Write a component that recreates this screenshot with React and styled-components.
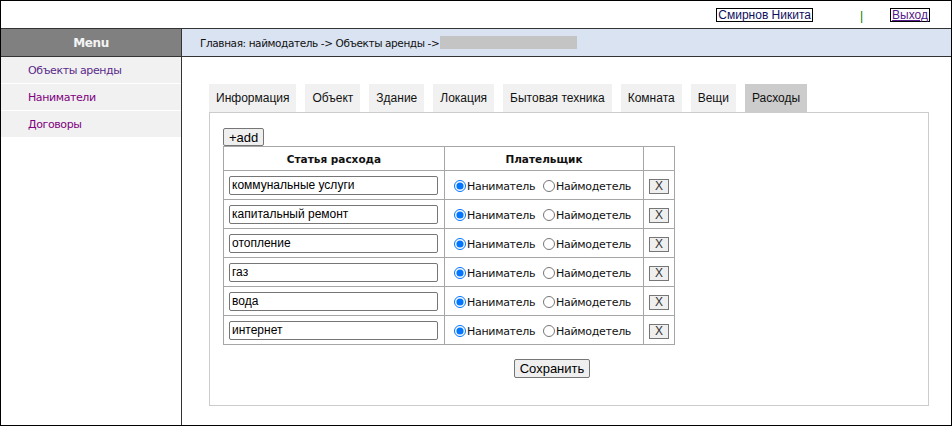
import React from 'react';
import styled, { createGlobalStyle } from 'styled-components';

const GlobalStyle = createGlobalStyle`
  html, body { margin: 0; padding: 0; background: #fff; }
  body { font-family: "Liberation Sans", Arial, sans-serif; }
`;

const tabs = ['Информация', 'Объект', 'Здание', 'Локация', 'Бытовая техника', 'Комната', 'Вещи', 'Расходы'];
const menu = [
  { label: 'Объекты аренды', visited: true },
  { label: 'Наниматели' },
  { label: 'Договоры' },
];
const expenses = ['коммунальные услуги', 'капитальный ремонт', 'отопление', 'газ', 'вода', 'интернет'];

function App() {
  return (
    <>
      <GlobalStyle />
      <Page>
        <TopBar>
          <UserBox>Смирнов Никита</UserBox>
          <Sep>|</Sep>
          <Logout href="#">Выход</Logout>
        </TopBar>
        <Shell>
          <Sidebar>
            <MenuHead>Menu</MenuHead>
            {menu.map((m) => (
              <MenuItem key={m.label} $visited={m.visited}>{m.label}</MenuItem>
            ))}
          </Sidebar>
          <Main>
            <Crumbs>
              <span>Главная: наймодатель -&gt; Объекты аренды -&gt;</span>
              <Hidden />
            </Crumbs>
            <Content>
              <Tabs>
                {tabs.map((t) => (
                  <Tab key={t} $active={t === 'Расходы'}>{t}</Tab>
                ))}
              </Tabs>
              <Panel>
                <AddButton>+add</AddButton>
                <Table>
                  <colgroup>
                    <col style={{ width: 221 }} />
                    <col style={{ width: 199 }} />
                    <col style={{ width: 31 }} />
                  </colgroup>
                  <thead>
                    <tr>
                      <Th>Статья расхода</Th>
                      <Th>Плательщик</Th>
                    </tr>
                  </thead>
                  <tbody>
                    {expenses.map((e, i) => (
                      <tr key={e}>
                        <Td>
                          <TextInput defaultValue={e} />
                        </Td>
                        <Td>
                          <RadioLabel>
                            <input type="radio" name={'payer' + i} defaultChecked />
                            Наниматель
                          </RadioLabel>
                          <RadioLabel>
                            <input type="radio" name={'payer' + i} />
                            Наймодетель
                          </RadioLabel>
                        </Td>
                        <XCell>
                          <RemoveButton>X</RemoveButton>
                        </XCell>
                      </tr>
                    ))}
                  </tbody>
                </Table>
                <Footer>
                  <SaveButton>Сохранить</SaveButton>
                </Footer>
              </Panel>
            </Content>
          </Main>
        </Shell>
      </Page>
    </>
  );
}

export default App;

const Page = styled.div`
  height: 100vh;
  box-sizing: border-box;
  border: 1px solid #000;
  display: flex;
  flex-direction: column;
`;

const TopBar = styled.div`
  height: 27px;
  display: flex;
  align-items: center;
  justify-content: flex-end;
  padding-right: 21px;
  font-size: 12px;
`;

const UserBox = styled.span`
  border: 1px solid #000;
  line-height: 12px;
  padding: 0 1px;
  color: #101060;
`;

const Sep = styled.span`
  color: #008000;
  margin: 0 27px 0 47px;
  line-height: 12px;
  padding-top: 2px;
`;

const Logout = styled.a`
  border: 1px solid #000;
  line-height: 12px;
  padding: 0 1px;
  color: #551a8b;
`;

const Shell = styled.div`
  flex: 1;
  display: flex;
  border-top: 1px solid #333;
`;

const Sidebar = styled.div`
  width: 181px;
  box-sizing: border-box;
  border-right: 1px solid #333;
  display: flex;
  flex-direction: column;
  gap: 1px;
`;

const MenuHead = styled.div`
  height: 27px;
  box-sizing: content-box;
  border-bottom: 1px solid #333;
  background: #808080;
  color: #f4f4f4;
  font: bold 12px "DejaVu Sans", Verdana, sans-serif;
  letter-spacing: -0.4px;
  display: flex;
  align-items: center;
  justify-content: center;
  margin-bottom: -1px;
`;

const MenuItem = styled.div`
  height: 26px;
  background: #f1f1f1;
  padding-left: 27px;
  display: flex;
  align-items: center;
  font: 11px "DejaVu Sans", Verdana, sans-serif;
  letter-spacing: -0.4px;
  color: ${(p) => (p.$visited ? '#5a2a8a' : '#800080')};
`;

const Main = styled.div`
  flex: 1;
  display: flex;
  flex-direction: column;
`;

const Crumbs = styled.div`
  height: 27px;
  border-bottom: 1px solid #333;
  background: #dae3f1;
  display: flex;
  align-items: center;
  gap: 1px;
  padding-left: 18px;
  font: 10.5px "DejaVu Sans", Verdana, sans-serif;
  letter-spacing: -0.4px;
  color: #111;
`;

const Hidden = styled.span`
  width: 137px;
  height: 13px;
  background: #c4c4c4;
`;

const Content = styled.div`
  padding: 27px 0 0 27px;
`;

const Tabs = styled.div`
  display: flex;
  gap: 9px;
`;

const Tab = styled.div`
  height: 28px;
  line-height: 28px;
  padding: 0 7px;
  font-size: 12px;
  color: #111;
  background: ${(p) => (p.$active ? '#cccccc' : '#f1f1f1')};
`;

const Panel = styled.div`
  width: 720px;
  height: 294px;
  box-sizing: border-box;
  border: 1px solid #ccc;
  padding: 15px 13px 0;
`;

const AddButton = styled.button`
  display: block;
  height: 18px;
  padding: 0 5px;
  font: 13px "Liberation Sans", Arial, sans-serif;
  background: #efefef;
  border: 1px solid #767676;
  border-radius: 2px;
  color: #000;
`;

const Table = styled.table`
  border-collapse: collapse;
  table-layout: fixed;
  width: 452px;
  border: 1px solid #a6a6a6;
`;

const Th = styled.th`
  border: 1px solid #a6a6a6;
  height: 23px;
  padding: 0;
  font: bold 10.5px "DejaVu Sans", Verdana, sans-serif;
  color: #111;
`;

const Td = styled.td`
  border: 1px solid #a6a6a6;
  height: 28px;
  padding: 0 5px;
  white-space: nowrap;
`;

const XCell = styled(Td)`
  text-align: center;
  padding: 0;
`;

const TextInput = styled.input`
  width: 209px;
  height: 19px;
  box-sizing: border-box;
  border: 1px solid #767676;
  border-radius: 2px;
  padding: 0 2px;
  font: 12px "Liberation Sans", Arial, sans-serif;
  color: #000;
  display: block;
`;

const RadioLabel = styled.label`
  font: 11px "DejaVu Sans", Verdana, sans-serif;
  letter-spacing: -0.3px;
  color: #111;
  margin-right: 4px;
  input {
    margin: 0 1px 0 4px;
    width: 12px;
    height: 12px;
    vertical-align: -2px;
  }
`;

const RemoveButton = styled.button`
  width: 20px;
  height: 15px;
  padding: 0;
  font: 12px "Liberation Sans", Arial, sans-serif;
  line-height: 12px;
  color: #333;
  background: #efefef;
  border: 1px solid #767676;
`;

const Footer = styled.div`
  width: 658px;
  text-align: center;
  padding-top: 14px;
`;

const SaveButton = styled.button`
  height: 19px;
  padding: 0 5px;
  font: 13px "Liberation Sans", Arial, sans-serif;
  background: #efefef;
  border: 1px solid #767676;
  border-radius: 2px;
  color: #000;
`;
